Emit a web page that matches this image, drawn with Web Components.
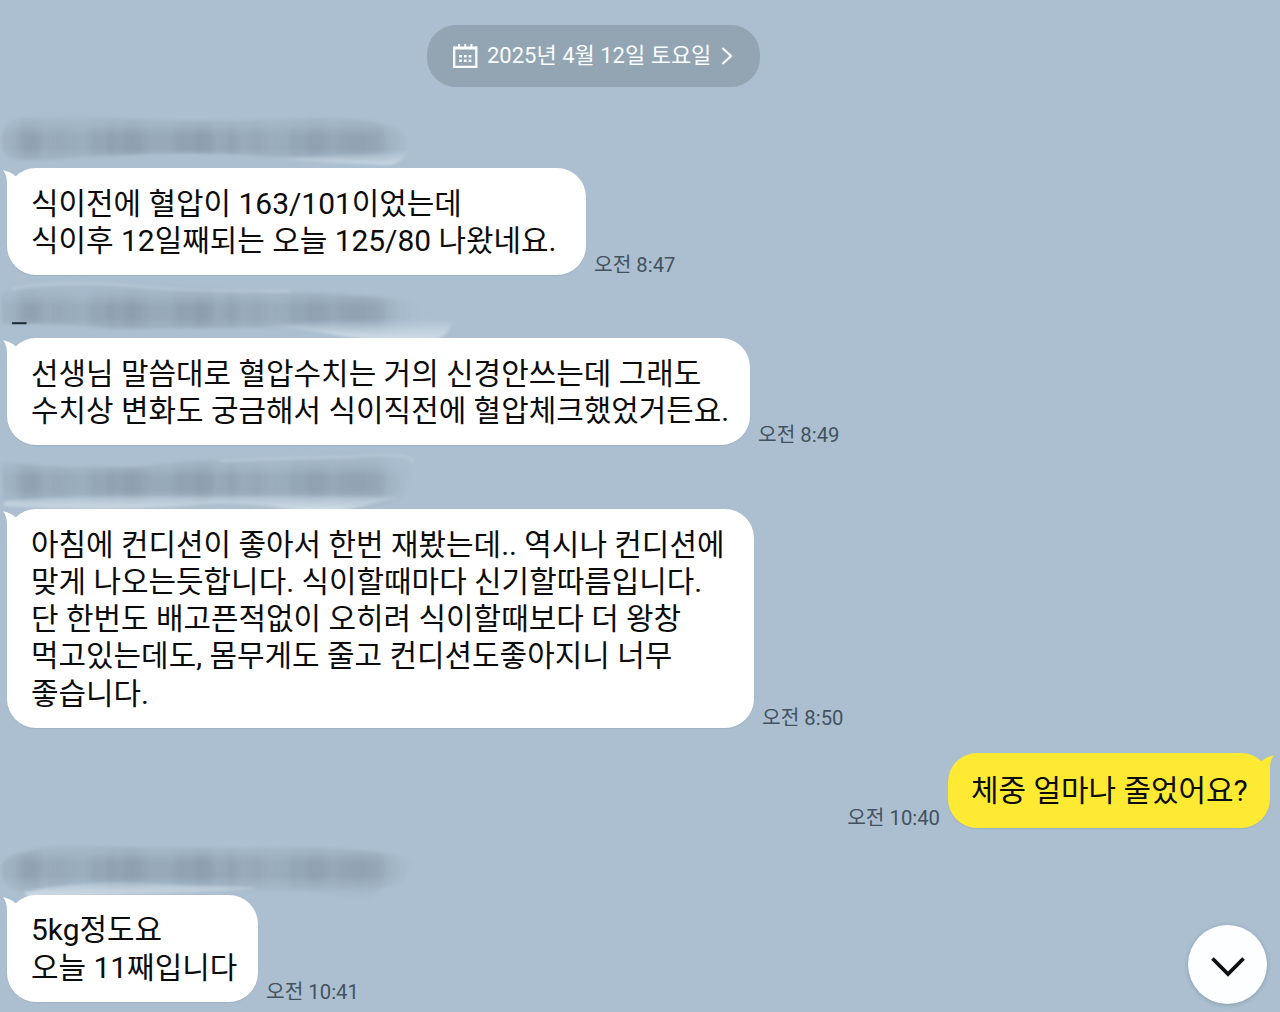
<!DOCTYPE html>
<html lang="ko">
<head>
<meta charset="utf-8">
<title>채팅</title>
<style>
  body {
    margin: 0;
    overflow: hidden;
    background-color: #abbfd0;
    font-family: Roboto, 'Noto Sans CJK KR', sans-serif;
  }
</style>
</head>

<template id="chat-room">
  <style>
    :host {
      display: flex;
      flex-direction: column;
      position: relative;
      box-sizing: border-box;
      height: 1012px;
      padding: 25px 10px 0 7px;
      overflow: hidden;
    }
  </style>
  <slot></slot>
</template>

<template id="date-pill">
  <style>
    :host {
      display: flex;
      align-items: center;
      box-sizing: border-box;
      width: 333px;
      height: 62px;
      margin: 0 0 18px 420px;
      padding-left: 26px;
      border-radius: 29px;
      background-color: #93a5b3;
      color: #fafdff;
      font-size: 22px;
      line-height: 30px;
      white-space: nowrap;
      flex: none;
    }

    svg {
      flex: none;
    }

    span {
      width: 224px;
      margin: 0 10px 0 9px;
    }
  </style>
  <svg width="25" height="25" viewBox="0 0 25 25" fill="none" stroke="currentColor" stroke-width="2">
    <path d="M1 4H24" stroke-width="3"/>
    <path d="M1.2 2.5V22.8H23.3V2.5" stroke-width="2.3"/>
    <path d="M6 0V4M12.2 0V4M18.4 0V4"/>
    <path d="M6.2 12.2H18.5M6.2 16.7H18.5" stroke-width="2.6" stroke-dasharray="2.8 1.9"/>
  </svg>
  <span><slot></slot></span>
  <svg width="12" height="18" viewBox="0 0 12 18" fill="none" stroke="currentColor" stroke-width="2.2">
    <path d="M1.5 1L10 9L1.5 17"/>
  </svg>
</template>

<template id="hidden-name">
  <style>
    :host {
      display: block;
      height: 63px;
      margin-left: -7px;
      flex: none;
    }

    svg {
      display: block;
      overflow: visible;
    }
  </style>
  <svg width="470" height="63" viewBox="0 0 470 63">
    <defs>
      <linearGradient id="stripes" gradientUnits="userSpaceOnUse" x1="0" x2="420" y1="0" y2="0"></linearGradient>
      <linearGradient id="fade" gradientUnits="userSpaceOnUse" x1="0" x2="0" y1="10" y2="62">
        <stop offset="0" stop-color="#fff" stop-opacity=".12"/>
        <stop offset=".2" stop-color="#fff" stop-opacity=".4"/>
        <stop offset=".4" stop-color="#fff" stop-opacity=".85"/>
        <stop offset=".64" stop-color="#fff" stop-opacity=".85"/>
        <stop offset=".9" stop-color="#fff" stop-opacity=".3"/>
        <stop offset="1" stop-color="#fff" stop-opacity=".1"/>
      </linearGradient>
      <linearGradient id="glow" gradientUnits="userSpaceOnUse" x1="0" x2="0" y1="44" y2="66">
        <stop offset="0" stop-color="#e4edf4" stop-opacity="0"/>
        <stop offset="1" stop-color="#e4edf4" stop-opacity=".7"/>
      </linearGradient>
      <mask id="mask" maskUnits="userSpaceOnUse" x="0" y="0" width="470" height="80">
        <rect width="470" height="80" fill="url(#fade)"/>
      </mask>
      <filter id="soft" filterUnits="userSpaceOnUse" x="-10" y="-10" width="490" height="90">
        <feGaussianBlur stdDeviation="1.6"/>
      </filter>
    </defs>
    <g mask="url(#mask)"><path id="body" fill="url(#stripes)" filter="url(#soft)"/></g>
    <path id="light" fill="url(#glow)" filter="url(#soft)"/>
    <path id="edge" fill="none" stroke="#c7d5e1" stroke-opacity=".6" stroke-width="2" filter="url(#soft)"/>
    <path id="mark" stroke="#1d2a33" stroke-width="2"/>
  </svg>
</template>

<template id="chat-message">
  <style>
    :host {
      display: flex;
      align-items: flex-end;
      gap: 8px;
      flex: none;
    }

    :host([mine]) {
      flex-direction: row-reverse;
    }

    .bubble {
      position: relative;
      display: flex;
      flex-direction: column;
      justify-content: center;
      box-sizing: border-box;
      min-height: 75px;
      padding: 16.6px 0 15.8px 24px;
      border-radius: 29px;
      background-color: var(--bubble, #fff);
      color: #0c0c0c;
      font-size: 29.93px;
      line-height: 37.3px;
      box-shadow: 0 1px 1px rgba(60, 85, 105, .12);
    }

    :host([mine]) .bubble {
      padding: 16px 0 16px 23px;
    }

    slot {
      white-space: pre;
    }

    .tail {
      position: absolute;
      left: -4px;
      top: 2px;
      fill: var(--bubble, #fff);
    }

    :host([mine]) .tail {
      left: auto;
      right: -4px;
      transform: scaleX(-1);
    }

    time {
      color: #43525f;
      font-size: 20.3px;
      line-height: 19px;
      white-space: nowrap;
    }
  </style>
  <div class="bubble">
    <svg class="tail" width="24" height="28" viewBox="0 0 24 28">
      <path d="M0 .3C4 1 9 3 12.8 6.4L23 10V27H4V14C4 8 3 4 0 .3Z"/>
    </svg>
    <slot></slot>
  </div>
  <time></time>
</template>

<template id="scroll-button">
  <style>
    :host {
      position: absolute;
      left: 1188px;
      top: 925px;
      display: flex;
      align-items: center;
      justify-content: center;
      width: 79px;
      height: 79px;
      border-radius: 50%;
      background-color: #fcfeff;
      box-shadow: 0 1px 4px rgba(50, 75, 95, .3);
    }

    svg {
      margin-top: 5px;
    }
  </style>
  <svg width="36" height="22" viewBox="0 0 36 22" fill="none" stroke="#111" stroke-width="3.8">
    <path d="M2.5 2.5L18 18L33.5 2.5"/>
  </svg>
</template>

<body>
  <chat-room>
    <date-pill>2025년 4월 12일 토요일</date-pill>

    <hidden-name shape="0"></hidden-name>
    <chat-message width="579" time="오전 8:47">식이전에 혈압이 163/101이었는데
식이후 12일째되는 오늘 125/80 나왔네요.</chat-message>

    <hidden-name shape="1"></hidden-name>
    <chat-message width="743" time="오전 8:49">선생님 말씀대로 혈압수치는 거의 신경안쓰는데 그래도
수치상 변화도 궁금해서 식이직전에 혈압체크했었거든요.</chat-message>

    <hidden-name shape="2" style="margin-top: 1px"></hidden-name>
    <chat-message width="747" time="오전 8:50">아침에 컨디션이 좋아서 한번 재봤는데.. 역시나 컨디션에
맞게 나오는듯합니다. 식이할때마다 신기할따름입니다.
단 한번도 배고픈적없이 오히려 식이할때보다 더 왕창
먹고있는데도, 몸무게도 줄고 컨디션도좋아지니 너무
좋습니다.</chat-message>

    <chat-message mine width="322" time="오전 10:40" style="margin-top: 25px; --bubble: #ffea33">체중 얼마나 줄었어요?</chat-message>

    <hidden-name shape="3" style="margin-top: 4px"></hidden-name>
    <chat-message width="251" time="오전 10:41">5kg정도요
오늘 11째입니다</chat-message>

    <scroll-button></scroll-button>
  </chat-room>
</body>

<script>
  // Outline, bright lower part, thin bright edge and leftover mark of each smudge.
  const SHAPES = [
    {
      body: 'M2 30Q3 15 22 13Q60 9 110 12Q190 17 250 15Q330 9 370 16Q400 20 406 34V48Q398 58 375 57L290 54Q240 47 150 49L80 52Q35 58 12 54Q2 50 2 38Z',
      light: 'M270 53Q350 51 408 46Q400 61 386 60Q330 58 270 53Z'
    },
    {
      body: 'M1 16Q60 4 130 10Q210 12 290 17Q370 18 420 28L448 48Q440 62 390 62Q330 57 290 52Q180 54 110 54Q60 47 2 50Z',
      light: 'M270 50Q350 46 400 44L452 46Q450 60 436 64Q390 68 340 61Q310 55 270 50Z',
      edge: 'M12 14Q60 5 130 11T290 16',
      mark: 'M12 48.2H26.5'
    },
    {
      body: 'M1 14Q30 20 75 21H140Q200 11 290 12Q380 6 402 9Q415 13 414 20L402 53Q360 65 325 65Q280 62 240 58Q120 64 4 60Z',
      light: 'M4 55Q100 48 220 50Q310 49 400 51Q370 59 350 63Q320 68 280 62Q240 56 200 59Q100 66 4 60Z',
      edge: 'M220 15Q280 12 350 11Q405 5 414 16'
    },
    {
      body: 'M2 34Q5 22 25 20Q60 10 100 14Q200 17 300 15Q390 17 412 28L404 51L382 56Q375 68 355 67Q340 67 325 61Q250 58 150 62L20 62Q2 55 2 42Z',
      light: 'M24 60Q90 46 160 52Q220 54 260 56Q230 60 130 62L28 65Z'
    }
  ];

  // Darkness along the smudge, as [x, opacity].
  const STRIPES = [
    [0, .3], [14, .45], [24, .85], [36, .85], [44, .6], [60, .65], [84, .5], [94, .75],
    [104, .72], [110, .9], [118, .82], [132, .98], [143, .82], [151, .65], [170, .65],
    [180, .88], [190, .83], [199, 1], [209, .92], [216, .66], [225, .7], [232, .85],
    [242, .6], [257, .72], [270, .53], [287, .6], [293, .77], [303, .75], [312, .9],
    [323, .85], [332, .68], [343, .8], [361, .85], [376, .75], [382, .65], [387, .4],
    [400, .15], [420, 0]
  ];

  function attach(el, id) {
    const template = document.querySelector('template#' + id);
    const root = el.attachShadow({ mode: 'open' });
    root.appendChild(document.importNode(template.content, true));
    return root;
  }

  for (const name of ['chat-room', 'date-pill', 'scroll-button']) {
    customElements.define(name, class extends HTMLElement {
      constructor() {
        super();
        attach(this, name);
      }
    });
  }

  customElements.define('hidden-name', class extends HTMLElement {
    connectedCallback() {
      const root = attach(this, 'hidden-name');
      const shape = SHAPES[this.getAttribute('shape')];
      for (const part in shape) {
        root.getElementById(part).setAttribute('d', shape[part]);
      }

      const gradient = root.getElementById('stripes');
      for (const [x, opacity] of STRIPES) {
        const stop = document.createElementNS('http://www.w3.org/2000/svg', 'stop');
        stop.setAttribute('offset', x / 420);
        stop.setAttribute('stop-color', '#8799a7');
        stop.setAttribute('stop-opacity', opacity);
        gradient.appendChild(stop);
      }
    }
  });

  customElements.define('chat-message', class extends HTMLElement {
    connectedCallback() {
      const root = attach(this, 'chat-message');
      root.querySelector('.bubble').style.width = this.getAttribute('width') + 'px';
      root.querySelector('time').textContent = this.getAttribute('time');
    }
  });
</script>
</html>
